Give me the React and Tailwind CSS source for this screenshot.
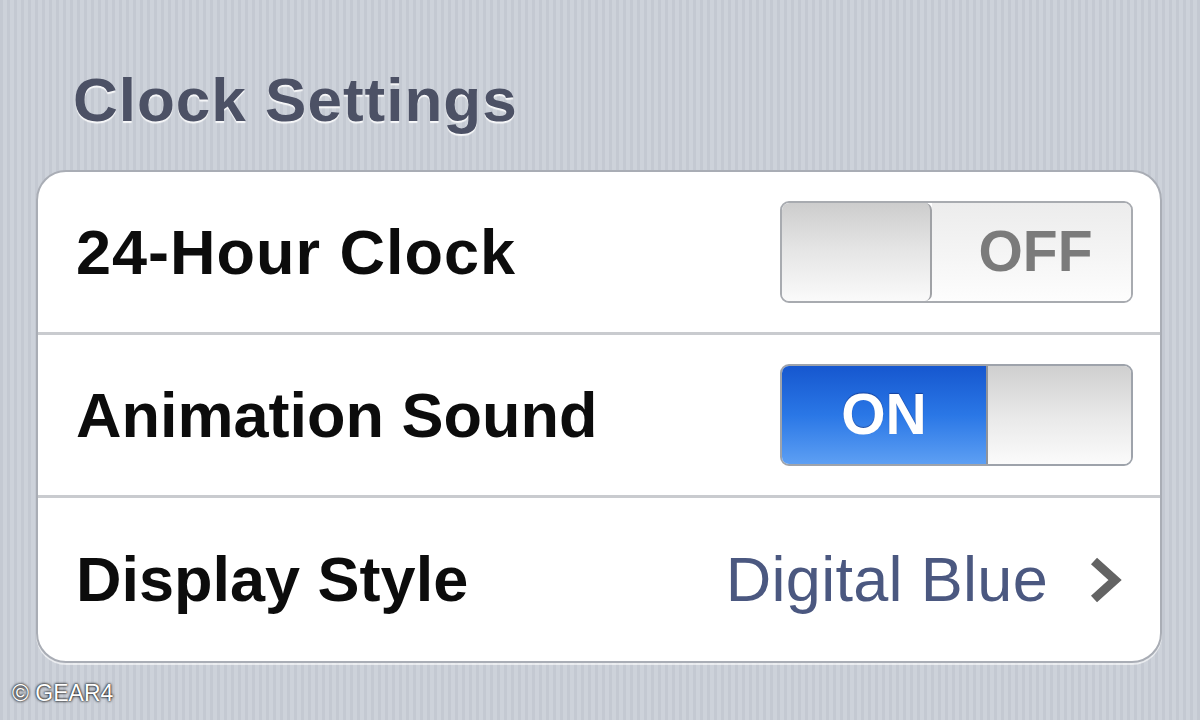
import React from "react";

const font = { fontFamily: '"Liberation Sans", Arial, sans-serif' };

const Toggle = ({ on }) => {
    if (on) {
        return (
            <div className="flex h-[102px] w-[353px] overflow-hidden rounded-[9px] border-2 border-[#9ea3ab]">
                <div className="flex w-[204px] items-center justify-center bg-[linear-gradient(180deg,#1657cf_0%,#2a77e6_50%,#5d9ff3_100%)] text-[57px] font-bold text-white [text-shadow:0_-1px_1px_rgba(0,0,60,0.4)]">
                    ON
                </div>
                <div className="flex-1 border-l-2 border-[#8f939a] bg-[linear-gradient(180deg,#cfcfcf_0%,#e8e8e8_50%,#fbfbfb_100%)]" />
            </div>
        );
    }
    return (
        <div className="flex h-[102px] w-[353px] overflow-hidden rounded-[9px] border-2 border-[#a8abb0]">
            <div className="w-[150px] rounded-[7px] border-r-2 border-[#a0a2a6] bg-[linear-gradient(180deg,#cdcdcd_0%,#e6e6e6_50%,#fafafa_100%)]" />
            <div className="flex flex-1 items-center justify-center bg-[linear-gradient(180deg,#ececec_0%,#f6f6f6_60%,#fdfdfd_100%)] pl-[8px] text-[57px] font-bold text-[#7b7b7b]">
                OFF
            </div>
        </div>
    );
};

const Row = ({ label, children, last, wide }) => (
    <div
        className={`flex h-[163px] items-center justify-between pl-[38px] pr-[27px] ${
            last ? "" : "border-b-[3px] border-[#c9cbcf]"
        }`}
    >
        <span className={`text-[63px] font-bold text-[#0c0c0c] ${wide ? "tracking-[1px]" : ""}`}>{label}</span>
        {children}
    </div>
);

const App = () => {
    return (
        <div
            className="relative h-[720px] w-[1200px] overflow-hidden bg-[repeating-linear-gradient(90deg,#c4c9d2_0px,#c4c9d2_3px,#cdd2da_3px,#cdd2da_7px)]"
            style={font}
        >
            <div className="px-[36px] pt-[70px]">
                <h2 className="mb-[40px] pl-[37px] text-[62px] font-bold leading-[60px] tracking-[1px] text-[#4c5165] [text-shadow:0_2px_1px_rgba(255,255,255,0.85)]">
                    Clock Settings
                </h2>
                <div className="w-[1126px] rounded-[30px] border-2 border-[#a9adb5] bg-white shadow-[0_2px_0_rgba(255,255,255,0.6)]">
                    <Row label="24-Hour Clock" wide>
                        <Toggle on={false} />
                    </Row>
                    <Row label="Animation Sound">
                        <Toggle on />
                    </Row>
                    <Row label="Display Style" last>
                        <div className="mr-[11px] flex items-center">
                            <span className="text-[63px] tracking-[0.3px] text-[#4b5880]">Digital Blue</span>
                            <svg width="34" height="48" viewBox="0 0 34 48" className="ml-[40px]">
                                <path d="M6 5 L27 24 L6 43" fill="none" stroke="#636363" strokeWidth="9" strokeLinecap="butt" strokeLinejoin="miter" />
                            </svg>
                        </div>
                    </Row>
                </div>
            </div>
            <div className="absolute bottom-[10px] left-[12px] text-[23px] text-white [text-shadow:0_0_3px_rgba(0,0,0,1),0_0_2px_rgba(0,0,0,0.8)]">
                © GEAR4
            </div>
        </div>
    );
};

export default App;
